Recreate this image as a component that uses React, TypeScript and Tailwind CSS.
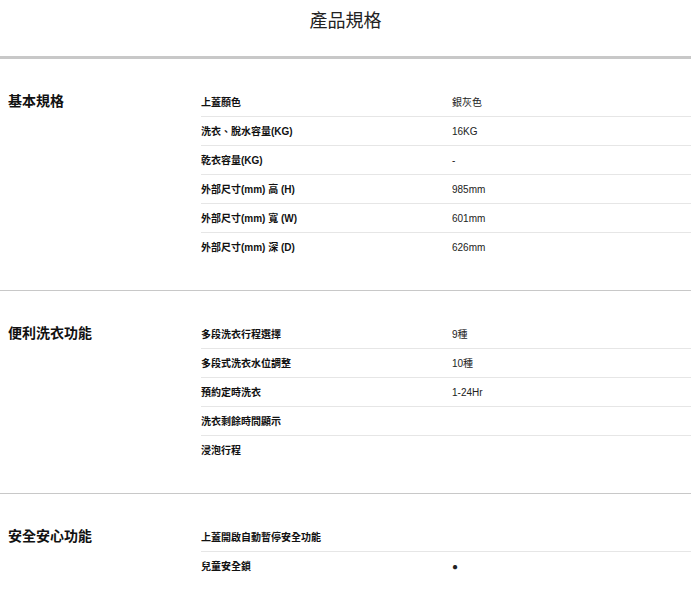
const sections = [
  {
    title: "基本規格",
    rows: [
      ["上蓋顏色", "銀灰色"],
      ["洗衣、脫水容量(KG)", "16KG"],
      ["乾衣容量(KG)", "-"],
      ["外部尺寸(mm) 高 (H)", "985mm"],
      ["外部尺寸(mm) 寬 (W)", "601mm"],
      ["外部尺寸(mm) 深 (D)", "626mm"],
    ],
  },
  {
    title: "便利洗衣功能",
    rows: [
      ["多段洗衣行程選擇", "9種"],
      ["多段式洗衣水位調整", "10種"],
      ["預約定時洗衣", "1-24Hr"],
      ["洗衣剩餘時間顯示", ""],
      ["浸泡行程", ""],
    ],
  },
  {
    title: "安全安心功能",
    rows: [
      ["上蓋開啟自動暫停安全功能", ""],
      ["兒童安全鎖", "●"],
    ],
  },
];

export default function App() {
  return (
    <div className="bg-white text-[#111] w-[691px] min-h-[600px] font-[Liberation_Sans,Noto_Sans_CJK_TC,sans-serif]">
      <h1 className="h-[56px] pt-[8px] text-center text-[18px] leading-[26px] text-[#222]">產品規格</h1>
      <div className="h-[3px] bg-[#c8c8c8]" />
      {sections.map((s, i) => (
        <div key={s.title} className={`flex pt-[29px] pb-[28px] ${i < sections.length - 1 ? "border-b border-[#c8c8c8]" : ""}`}>
          <div className="w-[201px] pl-[8px] pt-[5px] text-[14px] font-bold leading-[16px]">{s.title}</div>
          <div className="flex-1">
            {s.rows.map(([k, v], j) => (
              <div key={k} className={`flex h-[29px] items-center text-[10px] ${j < s.rows.length - 1 ? "border-b border-[#e6e6e6]" : ""}`}>
                <div className="w-[251px] font-bold">{k}</div>
                <div className="text-[#222]">{v}</div>
              </div>
            ))}
          </div>
        </div>
      ))}
    </div>
  );
}
